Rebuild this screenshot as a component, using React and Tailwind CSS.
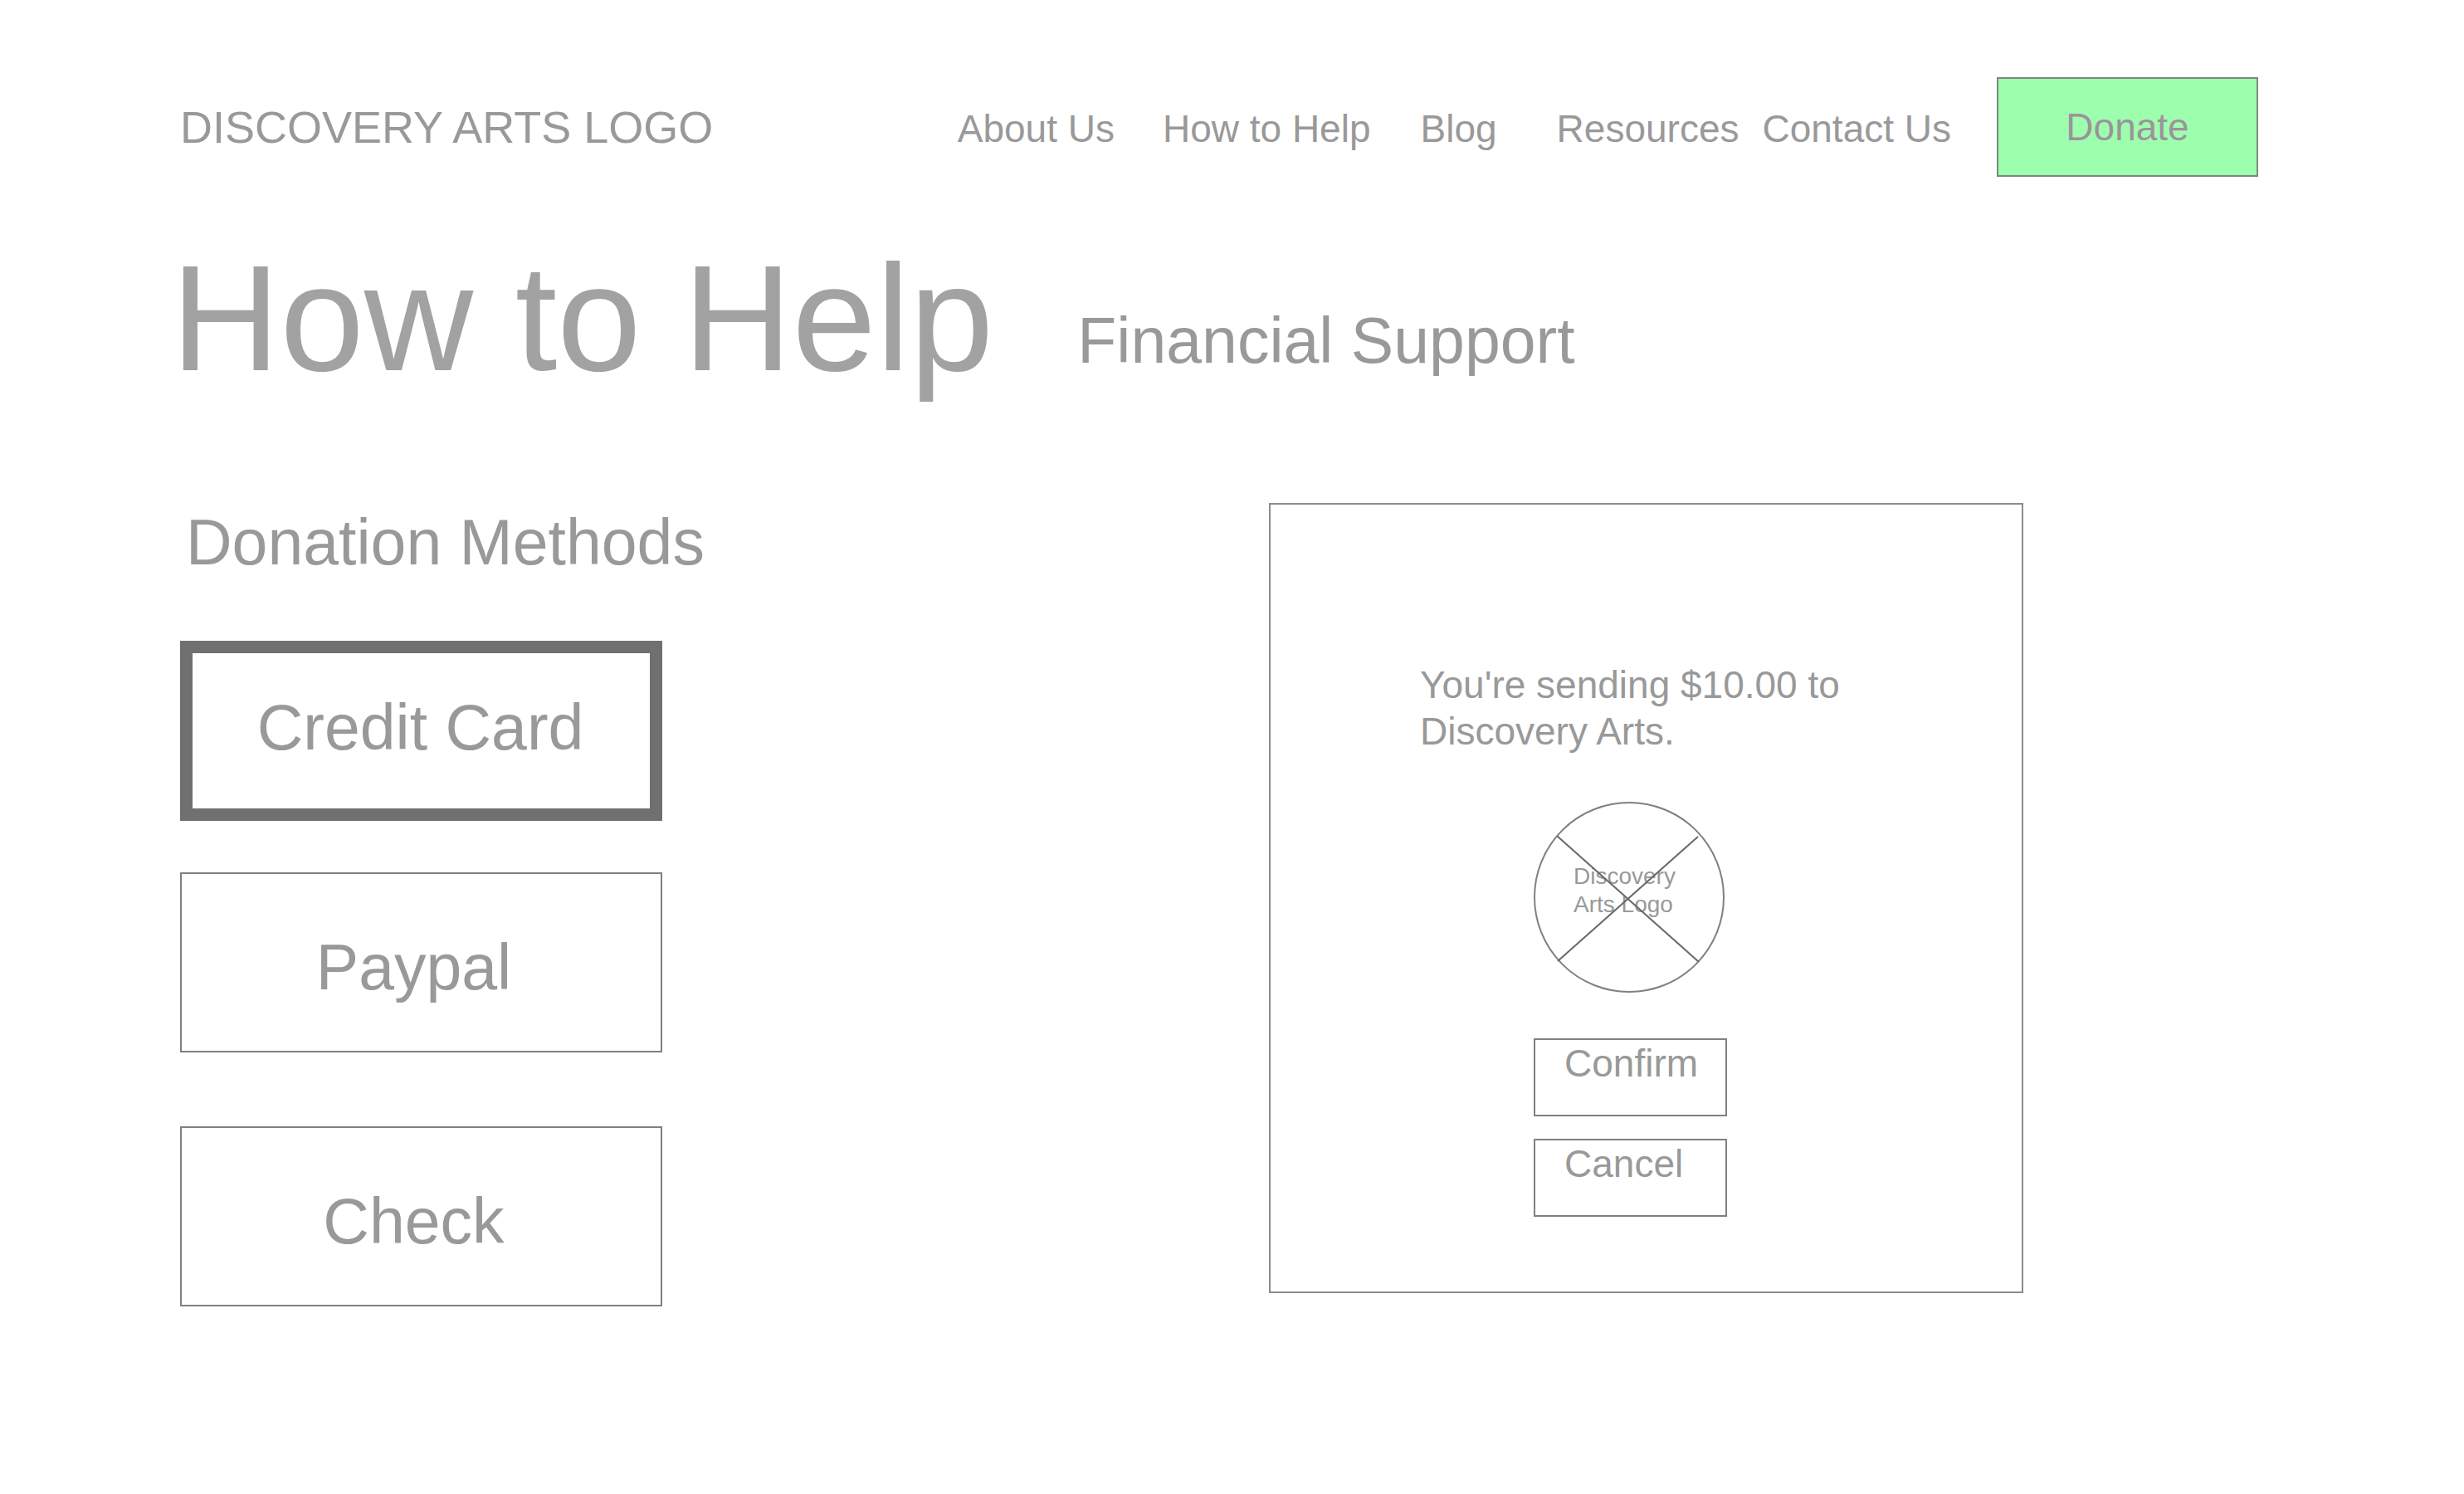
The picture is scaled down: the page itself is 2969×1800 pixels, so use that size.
const navLinks = [
  { label: "About Us", className: "mr-[58px]" },
  { label: "How to Help", className: "mr-[60px]" },
  { label: "Blog", className: "mr-[72px]" },
  { label: "Resources", className: "mr-[28px]" },
  { label: "Contact Us", className: "mr-[55px]" },
];

function Header() {
  return (
    <header className="flex items-center pt-[93px] pr-[248px] pl-[217px]">
      <a href="#home" className="text-[54px] leading-[60px]">
        DISCOVERY ARTS LOGO
      </a>
      <nav className="mt-1 ml-auto flex text-[46px] leading-[52px]">
        {navLinks.map((link) => (
          <a key={link.label} href="#" className={link.className}>
            {link.label}
          </a>
        ))}
      </nav>
      <button
        type="button"
        className="h-[120px] w-[315px] border-2 border-[#7a8a7c] bg-[#9dffad] text-[46px] leading-[52px] text-[#9d939c]"
      >
        Donate
      </button>
    </header>
  );
}

function MethodButton({ label, selected = false, className }) {
  const frame = selected
    ? "border-[15px] border-[#707070]"
    : "border-2 border-[#808080]";
  return (
    <button
      type="button"
      aria-pressed={selected}
      className={`h-[217px] w-[581px] text-[77px] leading-[88px] ${frame} ${className}`}
    >
      {label}
    </button>
  );
}

function DonationMethods() {
  return (
    <section className="flex flex-col items-start pt-[3px]">
      <h2 className="pl-[7px] text-[77px] leading-[88px]">Donation Methods</h2>
      <MethodButton label="Credit Card" selected className="mt-[75px] pr-[2px] pb-[10px]" />
      <MethodButton label="Paypal" className="mt-[62px] pt-[10px] pr-[18px]" />
      <MethodButton label="Check" className="mt-[89px] pt-[10px] pr-[18px]" />
    </section>
  );
}

function LogoPlaceholder() {
  return (
    <div className="relative h-[231px] w-[231px] pt-[73px] pl-[48px]">
      <p className="text-[28px] leading-[34px]">
        Discovery
        <br />
        Arts Logo
      </p>
      <svg
        className="absolute inset-0 h-full w-full"
        viewBox="0 0 231 231"
        fill="none"
        aria-hidden="true"
      >
        <circle cx="115" cy="115" r="114" stroke="#808080" strokeWidth="2" />
        <path d="M28 41 199 193M198 42 29 192" stroke="#686868" strokeWidth="2" />
      </svg>
    </div>
  );
}

function ActionButton({ label }) {
  return (
    <button
      type="button"
      className="flex h-[94px] w-[233px] items-start border-2 border-[#808080] pt-[2px] pl-[35px] text-[46px] leading-[52px]"
    >
      {label}
    </button>
  );
}

function ConfirmationCard() {
  return (
    <section className="mr-[531px] ml-auto w-[909px] border-2 border-[#8c8c8c] pt-[189px] pb-[90px] pl-[180px]">
      <p className="text-[46px] leading-[56px]">
        You're sending $10.00 to
        <br />
        Discovery Arts.
      </p>
      <div className="mt-[57px] ml-[137px] flex flex-col items-start">
        <LogoPlaceholder />
        <div className="mt-[54px] flex flex-col gap-[27px]">
          <ActionButton label="Confirm" />
          <ActionButton label="Cancel" />
        </div>
      </div>
    </section>
  );
}

export default function App() {
  return (
    <div className="min-h-screen bg-white pb-[226px] font-['Liberation_Sans',Arial,sans-serif] text-[#999999]">
      <Header />
      <main>
        <div className="mt-[70px] flex items-end pl-[206px]">
          <h1 className="text-[182px] leading-[200px] text-[#a2a2a2]">How to Help</h1>
          <p className="mb-[29px] ml-[101px] text-[77px] leading-[88px]">Financial Support</p>
        </div>
        <div className="mt-[123px] flex items-start pl-[217px]">
          <DonationMethods />
          <ConfirmationCard />
        </div>
      </main>
    </div>
  );
}
